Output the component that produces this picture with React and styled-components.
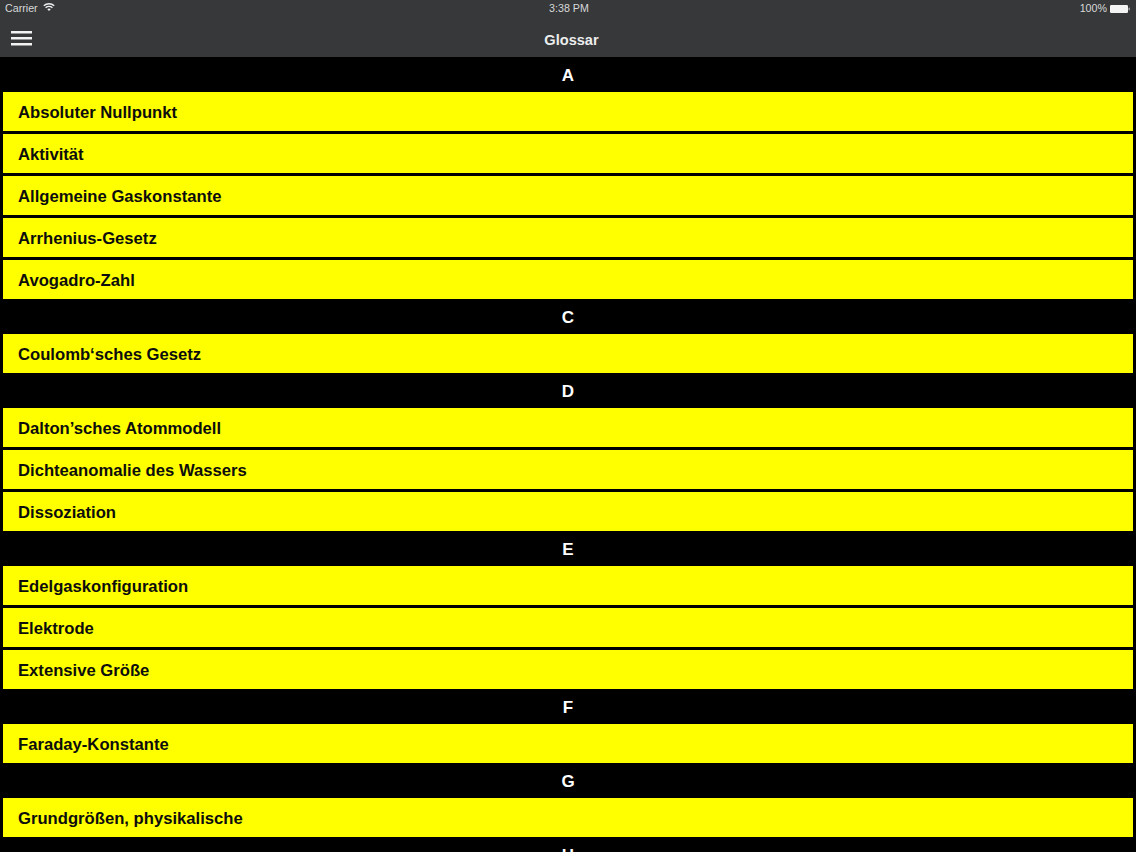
import styled, { createGlobalStyle } from "styled-components";

const GlobalStyle = createGlobalStyle`
  html, body {
    margin: 0;
    padding: 0;
    height: 100%;
    background: #000;
    overflow: hidden;
  }
`;

const Screen = styled.div`
  width: 1136px;
  height: 852px;
  display: flex;
  flex-direction: column;
  overflow: hidden;
  background: #000;
  font-family: "Liberation Sans", Arial, sans-serif;
`;

const TopBar = styled.header`
  flex: none;
  height: 57px;
  box-sizing: border-box;
  background: #36383a;
  color: #fff;
`;

const StatusBar = styled.div`
  height: 16px;
  padding: 0 5px;
  display: grid;
  grid-template-columns: 1fr auto 1fr;
  align-items: center;
  font-size: 10.7px;
  color: #d8d9d9;
`;

const StatusLeft = styled.div`
  display: flex;
  align-items: center;
  gap: 5px;
`;

const WifiIcon = styled.svg`
  display: block;
  width: 12px;
  height: 8px;
  margin-top: -2px;
`;

const Clock = styled.span`
  margin-left: 2px;
`;

const StatusRight = styled.div`
  display: flex;
  align-items: center;
  justify-content: flex-end;
  gap: 3px;
  padding-right: 1px;
`;

const BatteryIcon = styled.svg`
  display: block;
  width: 20px;
  height: 8px;
  margin-top: 1px;
`;

const NavBar = styled.div`
  height: 41px;
  box-sizing: border-box;
  padding: 7px 11px 0;
  display: grid;
  grid-template-columns: 1fr auto 1fr;
  align-items: center;
`;

const MenuIcon = styled.svg`
  display: block;
  width: 21px;
  height: 15px;
  margin-bottom: 4px;
`;

const Title = styled.h1`
  margin: 0 0 0 7px;
  font-size: 14.6px;
  font-weight: 700;
  color: #eceded;
`;

const List = styled.main`
  flex: none;
  padding: 0 3px;
`;

const SectionTitle = styled.h2`
  margin: 0;
  height: 35px;
  box-sizing: border-box;
  padding-top: 2px;
  display: flex;
  align-items: center;
  justify-content: center;
  font-size: 17px;
  font-weight: 700;
  color: #fff;
`;

const Rows = styled.ul`
  list-style: none;
  margin: 0;
  padding: 0;
  display: flex;
  flex-direction: column;
  gap: 3px;
`;

const Row = styled.li`
  height: 39px;
  box-sizing: border-box;
  padding: 2px 0 0 15px;
  display: flex;
  align-items: center;
  background: #ffff00;
  color: #0d0d0d;
  font-size: 16.65px;
  font-weight: 700;
`;

const sections = [
  {
    letter: "A",
    terms: ["Absoluter Nullpunkt", "Aktivität", "Allgemeine Gaskonstante", "Arrhenius-Gesetz", "Avogadro-Zahl"],
  },
  { letter: "C", terms: ["Coulomb‘sches Gesetz"] },
  { letter: "D", terms: ["Dalton’sches Atommodell", "Dichteanomalie des Wassers", "Dissoziation"] },
  { letter: "E", terms: ["Edelgaskonfiguration", "Elektrode", "Extensive Größe"] },
  { letter: "F", terms: ["Faraday-Konstante"] },
  { letter: "G", terms: ["Grundgrößen, physikalische"] },
  { letter: "H", terms: [] },
];

function Wifi() {
  return (
    <WifiIcon viewBox="0 0 12 8" fill="none" stroke="#eeeeee" strokeWidth="1.500">
      <path d="M.8 2.800C3.700.2 8.300.2 11.200 2.800" />
      <path d="M2.600 4.700c1.900-1.700 4.900-1.700 6.800 0" />
      <path d="M6 8 4.300 6.200c1-.8 2.400-.8 3.400 0z" fill="#eeeeee" stroke="none" />
    </WifiIcon>
  );
}

function Battery() {
  return (
    <BatteryIcon viewBox="0 0 20 8">
      <rect x="0" y="0" width="18" height="8" rx="1.200" fill="#f4f4f4" />
      <rect x="18.500" y="2.500" width="1.500" height="3" rx="0.700" fill="#9a9b9c" />
    </BatteryIcon>
  );
}

export default function App() {
  return (
    <Screen>
      <GlobalStyle />
      <TopBar>
        <StatusBar>
          <StatusLeft>
            <span>Carrier</span>
            <Wifi />
          </StatusLeft>
          <Clock>3:38 PM</Clock>
          <StatusRight>
            <span>100%</span>
            <Battery />
          </StatusRight>
        </StatusBar>
        <NavBar>
          <MenuIcon viewBox="0 0 21 15" fill="#f2f2f2">
            <rect y="0" width="21" height="2.500" />
            <rect y="6" width="21" height="2.500" />
            <rect y="12" width="21" height="2.500" />
          </MenuIcon>
          <Title>Glossar</Title>
          <span />
        </NavBar>
      </TopBar>
      <List>
        {sections.map((section) => (
          <section key={section.letter}>
            <SectionTitle>{section.letter}</SectionTitle>
            <Rows>
              {section.terms.map((term) => (
                <Row key={term}>{term}</Row>
              ))}
            </Rows>
          </section>
        ))}
      </List>
    </Screen>
  );
}
